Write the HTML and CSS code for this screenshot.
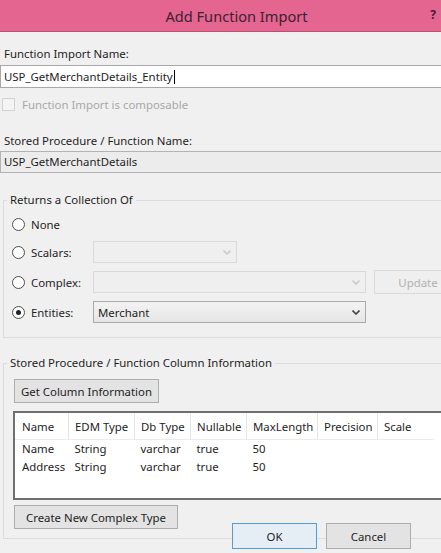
FILE: index.html
```html
<!DOCTYPE html>
<html lang="en">

<head>
  <meta charset="UTF-8">
  <title>Add Function Import</title>
  <link rel="stylesheet" href="styles.css">
</head>

<body>
  <!-- title bar -->
  <header class="titlebar">
    <h1>Add Function Import</h1>
    <span class="help">?</span>
  </header>

  <div class="form">
    <label class="field-label">Function Import Name:</label>
    <div class="textbox">USP_GetMerchantDetails_Entity<span class="caret"></span></div>

    <div class="check-row">
      <span class="checkbox"></span>
      <span>Function Import is composable</span>
    </div>

    <label class="field-label label-gap">Stored Procedure / Function Name:</label>
    <div class="textbox readonly">USP_GetMerchantDetails</div>

    <!-- return type -->
    <fieldset class="group returns">
      <legend>Returns a Collection Of</legend>

      <div class="radio-row short">
        <span class="radio-item"><span class="radio"></span>None</span>
      </div>

      <div class="radio-row">
        <span class="radio-item"><span class="radio"></span>Scalars:</span>
        <div class="combo disabled combo-small">
          <svg class="chev" width="8" height="5" viewBox="0 0 8 5"><path d="M0.5 0.5 L4 4 L7.5 0.5" fill="none" stroke="currentColor" stroke-width="1.3"/></svg>
        </div>
      </div>

      <div class="radio-row">
        <span class="radio-item"><span class="radio"></span>Complex:</span>
        <div class="combo disabled">
          <svg class="chev" width="8" height="5" viewBox="0 0 8 5"><path d="M0.5 0.5 L4 4 L7.5 0.5" fill="none" stroke="currentColor" stroke-width="1.3"/></svg>
        </div>
        <button class="btn btn-disabled btn-update">Update</button>
      </div>

      <div class="radio-row">
        <span class="radio-item"><span class="radio checked"></span>Entities:</span>
        <div class="combo">
          <span>Merchant</span>
          <svg class="chev" width="8" height="5" viewBox="0 0 8 5"><path d="M0.5 0.5 L4 4 L7.5 0.5" fill="none" stroke="currentColor" stroke-width="1.6"/></svg>
        </div>
      </div>
    </fieldset>

    <!-- column info -->
    <fieldset class="group columns">
      <legend>Stored Procedure / Function Column Information</legend>
      <button class="btn btn-get">Get Column Information</button>

      <div class="grid-box">
        <table>
          <thead>
            <tr>
              <th class="c-name">Name</th>
              <th class="c-edm">EDM Type</th>
              <th class="c-db">Db Type</th>
              <th class="c-null">Nullable</th>
              <th class="c-max">MaxLength</th>
              <th class="c-prec">Precision</th>
              <th class="c-scale">Scale</th>
            </tr>
          </thead>
          <tbody>
            <tr>
              <td>Name</td><td>String</td><td>varchar</td><td>true</td><td>50</td><td></td><td></td>
            </tr>
            <tr>
              <td>Address</td><td>String</td><td>varchar</td><td>true</td><td>50</td><td></td><td></td>
            </tr>
          </tbody>
        </table>
      </div>

      <button class="btn btn-create">Create New Complex Type</button>
    </fieldset>

    <!-- dialog buttons -->
    <div class="dialog-buttons">
      <button class="btn btn-default">OK</button>
      <button class="btn">Cancel</button>
    </div>
  </div>
</body>

</html>
```

FILE: styles.css
```css
/* page */
html,
body {
  margin: 0;
  padding: 0;
  overflow: hidden;
  background-color: #f0f0f0;
  font-family: "Noto Sans", "Open Sans", sans-serif;
  font-size: 11.4px;
  color: #1e1e1e;
}

/* title bar */
.titlebar {
  height: 31px;
  background-color: #e4658f;
  border-bottom: 1px solid #b8516f;
  display: flex;
  align-items: center;
  justify-content: center;
  position: relative;
}

.titlebar h1 {
  margin: 0 0 0 32px;
  font-size: 14.6px;
  font-weight: normal;
  color: #3d2232;
}

.help {
  position: absolute;
  right: 5px;
  top: 6px;
  font-weight: bold;
  font-size: 12px;
  color: #3d2232;
}

/* fields */
.field-label {
  display: block;
  margin-top: 14px;
  padding-left: 4px;
  line-height: 16px;
}

.label-gap {
  margin-top: 21px;
}

.textbox {
  margin-top: 3px;
  height: 23px;
  box-sizing: border-box;
  width: calc(100% + 6px);
  border: 1px solid #a8a8a8;
  background-color: white;
  padding-left: 3px;
  line-height: 20px;
  display: flex;
  align-items: center;
}

.caret {
  display: inline-block;
  width: 1px;
  height: 14px;
  background-color: black;
  margin-left: 1px;
}

.textbox.readonly {
  margin-top: 2px;
  height: 22px;
  background-color: #ececec;
  border-color: #b3b3b3;
}

.check-row {
  margin-top: 8px;
  height: 16px;
  display: flex;
  align-items: center;
  gap: 7px;
  padding-left: 2px;
  color: #a8a8a8;
}

.checkbox {
  width: 11px;
  height: 11px;
  border: 1px solid #d2d2d2;
  background-color: #f4f4f4;
}

/* group boxes */
.group {
  margin: 0 -10px 0 3px;
  border: 1px solid #d9dde0;
  padding: 0;
}

.group legend {
  margin-left: -5px;
  padding: 0 3px 0 3px;
  line-height: 16px;
}

.returns {
  margin-top: 19px;
  padding: 7px 0 14px 8px;
}

.columns {
  margin-top: 17px;
  padding: 8px 0 9px 9px;
}

.columns legend {
  margin-left: -6px;
}

/* radio rows */
.radio-row {
  display: flex;
  align-items: center;
  height: 22px;
  margin-top: 8px;
}

.radio-row.short {
  margin-top: 0;
  height: 18px;
}

.radio-item {
  display: flex;
  align-items: center;
  gap: 6px;
  width: 81px;
  flex-shrink: 0;
}

.radio {
  width: 11px;
  height: 11px;
  border: 1px solid #4f4f4f;
  border-radius: 50%;
  background-color: white;
  position: relative;
}

.radio.checked::after {
  content: "";
  position: absolute;
  left: 3px;
  top: 3px;
  width: 5px;
  height: 5px;
  border-radius: 50%;
  background-color: #222;
}

/* combo boxes */
.combo {
  width: 273px;
  height: 22px;
  box-sizing: border-box;
  border: 1px solid #a9a9a9;
  background: linear-gradient(#f3f3f3, #e6e6e6);
  display: flex;
  align-items: center;
  justify-content: space-between;
  padding: 0 5px 0 4px;
  color: #1e1e1e;
}

.combo.disabled {
  border-color: #d9d9d9;
  background: #efefef;
  color: #c4c4c4;
  justify-content: flex-end;
}

.combo-small {
  width: 144px;
}

.chev {
  color: #444;
}

.combo.disabled .chev {
  color: #c4c4c4;
}

/* buttons */
.btn {
  font-family: inherit;
  font-size: 11.4px;
  color: #1e1e1e;
  background-color: #e3e3e3;
  border: 1px solid #adadad;
  height: 24px;
  padding: 0 6px;
  display: block;
  white-space: nowrap;
}

.btn-disabled {
  color: #b1b1b1;
  border-color: #dadada;
  background-color: #efefef;
}

.btn-update {
  margin-left: 8px;
  width: 80px;
  height: 24px;
  text-align: center;
  padding-left: 14px;
}

.btn-get {
  margin-left: 1px;
  width: 145px;
}

.btn-create {
  margin: 5px 0 0 1px;
  width: 164px;
}

/* column grid */
.grid-box {
  margin-top: 8px;
  height: 89px;
  box-sizing: border-box;
  border: 2px solid #6f6f6f;
  background-color: white;
}

table {
  border-collapse: collapse;
  table-layout: fixed;
}

th {
  font-weight: normal;
  text-align: left;
  height: 26px;
  padding: 0 0 0 6px;
  border-right: 1px solid #e5e5e5;
  border-bottom: 1px solid #ececec;
}

td {
  height: 18px;
  padding: 0 0 0 6px;
  line-height: 18px;
}

.c-name { width: 46px; padding-left: 7px; }
.c-edm { width: 59px; }
.c-db { width: 49px; }
.c-null { width: 49px; }
.c-max { width: 64px; }
.c-prec { width: 53px; }
.c-scale { width: 50px; border-right: none; }

td:first-child {
  padding-left: 7px;
}

/* OK / Cancel */
.dialog-buttons {
  display: flex;
  gap: 9px;
  margin-top: -16px;
  padding-left: 232px;
  position: relative;
}

.dialog-buttons .btn {
  width: 85px;
  height: 26px;
}

.btn-default {
  border-color: #5a9bd5;
  background-color: #e5edf5;
}
```
